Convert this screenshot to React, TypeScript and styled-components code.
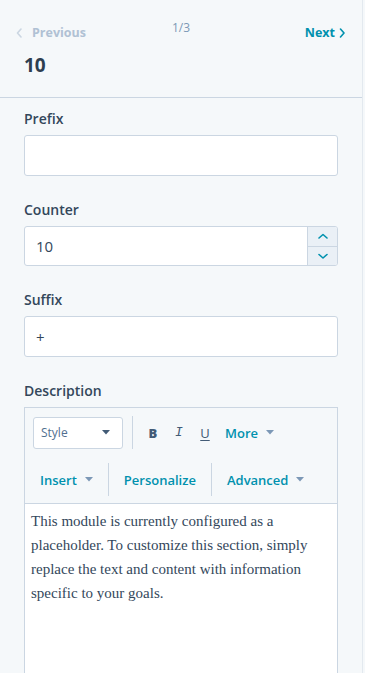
import React from 'react';
import styled, { createGlobalStyle } from 'styled-components';

const GlobalStyle = createGlobalStyle`
  html, body {
    margin: 0;
    padding: 0;
    background: #f5f8fa;
  }
  body {
    font-family: "Open Sans", "Noto Sans", sans-serif;
    color: #33475b;
  }
  * { box-sizing: border-box; }
`;

const Panel = styled.div`
  width: 363px;
  min-height: 673px;
  background: #f5f8fa;
  border-right: 1px solid #e3e9ef;
`;

const Header = styled.header`
  padding: 23px 16px 20px;
  border-bottom: 1px solid #cbd6e2;
`;

const NavRow = styled.div`
  display: grid;
  grid-template-columns: 1fr auto 1fr;
  align-items: start;
`;

const NavLink = styled.button<{ $disabled?: boolean; $align?: 'left' | 'right' }>`
  display: inline-flex;
  align-items: center;
  gap: ${(p) => (p.$align === 'right' ? 4 : 9)}px;
  justify-self: ${(p) => (p.$align === 'right' ? 'end' : 'start')};
  padding: 0;
  border: 0;
  background: none;
  font-family: inherit;
  font-size: 12.5px;
  font-weight: 700;
  line-height: 20px;
  color: ${(p) => (p.$disabled ? '#b0c1d4' : '#0091ae')};
  cursor: ${(p) => (p.$disabled ? 'default' : 'pointer')};
  svg { display: block; }
`;

const Pager = styled.span`
  margin-top: -3px;
  font-size: 12px;
  line-height: 16px;
  color: #7c98b6;
`;

const Title = styled.h1`
  margin: 10px 0 0 8px;
  font-size: 19px;
  line-height: 24px;
  font-weight: 700;
  color: #2d3e50;
`;

const Body = styled.div`
  padding: 11px 24px 0;
  display: flex;
  flex-direction: column;
  gap: 24px;
`;

const Field = styled.div`
  display: flex;
  flex-direction: column;
  gap: 6px;
`;

const Label = styled.label`
  font-size: 14px;
  line-height: 20px;
  font-weight: 600;
  color: #33475b;
`;

const TextBox = styled.div<{ $height?: number }>`
  height: ${(p) => p.$height ?? 41}px;
  background: #fff;
  border: 1px solid #cbd6e2;
  border-radius: 3px;
  display: flex;
  align-items: center;
  padding-left: 11px;
  font-size: 15px;
  color: #33475b;
  overflow: hidden;
`;

const Value = styled.span`
  flex: 1;
`;

const Stepper = styled.div`
  align-self: stretch;
  width: 30px;
  display: grid;
  grid-template-rows: 1fr 1fr;
  border-left: 1px solid #cbd6e2;
  background: #eaf0f6;
`;

const StepButton = styled.button`
  border: 0;
  padding: 0;
  background: none;
  display: flex;
  align-items: center;
  justify-content: center;
  & + & { border-top: 1px solid #cbd6e2; }
`;

const Editor = styled.div`
  border: 1px solid #cbd6e2;
  background: #fff;
`;

const Toolbar = styled.div`
  background: #f5f8fa;
  border-bottom: 1px solid #cbd6e2;
`;

const ToolRow = styled.div<{ $first?: boolean }>`
  display: flex;
  align-items: center;
  padding: ${(p) => (p.$first ? '8px 8px 0' : '14px 0 7px')};
`;

const Select = styled.div`
  width: 90px;
  height: 32px;
  background: #fff;
  border: 1px solid #cbd6e2;
  border-radius: 3px;
  display: flex;
  align-items: center;
  justify-content: space-between;
  padding: 0 12px 0 7px;
  font-size: 12px;
  color: #516f90;
`;

const VDivider = styled.span<{ $height: number }>`
  width: 1px;
  height: ${(p) => p.$height}px;
  background: #cbd6e2;
`;

const FormatGroup = styled.div`
  display: flex;
  align-items: center;
  margin-left: 7px;
`;

const FormatButton = styled.span<{ $kind: 'b' | 'i' | 'u' }>`
  width: 26px;
  text-align: center;
  font-size: 13px;
  line-height: 20px;
  color: #425b76;
  font-family: ${(p) => (p.$kind === 'i' ? '"Liberation Mono", monospace' : 'inherit')};
  font-weight: ${(p) => (p.$kind === 'b' ? 800 : 400)};
  font-style: ${(p) => (p.$kind === 'i' ? 'italic' : 'normal')};
  text-decoration: ${(p) => (p.$kind === 'u' ? 'underline' : 'none')};
  text-underline-offset: 2px;
`;

const ToolMenu = styled.span<{ $divider?: boolean; $pad?: number }>`
  display: inline-flex;
  align-items: center;
  gap: 8px;
  padding: 0 ${(p) => p.$pad ?? 15}px;
  height: 33px;
  font-size: 13px;
  font-weight: 600;
  color: #0091ae;
  border-right: ${(p) => (p.$divider ? '1px solid #cbd6e2' : '0')};
`;

const Content = styled.div`
  min-height: 220px;
  padding: 5px 6px 0;
  font-family: "Liberation Serif", "Times New Roman", serif;
  font-size: 15px;
  line-height: 24px;
  color: #33475b;
`;

const Caret = ({ color = '#7c98b6' }: { color?: string }) => (
  <svg width="8" height="5" viewBox="0 0 8 5">
    <path d="M0 0 L8 0 L4 4.5 Z" fill={color} />
  </svg>
);

const Chevron = ({ dir, color }: { dir: 'left' | 'right' | 'up' | 'down'; color: string }) => {
  const paths = {
    left: 'M5 1 L1.5 5 L5 9',
    right: 'M1.5 1 L5 5 L1.5 9',
    up: 'M1 5 L5 1.5 L9 5',
    down: 'M1 1.5 L5 5 L9 1.5',
  };
  const horizontal = dir === 'left' || dir === 'right';
  return (
    <svg
      width={horizontal ? 7 : 10}
      height={horizontal ? 10 : 7}
      viewBox={horizontal ? '0 0 7 10' : '0 0 10 7'}
      fill="none"
    >
      <path d={paths[dir]} stroke={color} strokeWidth="1.6" strokeLinecap="round" strokeLinejoin="round" />
    </svg>
  );
};

const App: React.FC = () => (
  <Panel>
    <GlobalStyle />
    <Header>
      <NavRow>
        <NavLink $disabled>
          <Chevron dir="left" color="#cbd6e2" />
          <span>Previous</span>
        </NavLink>
        <Pager>1/3</Pager>
        <NavLink $align="right">
          <span>Next</span>
          <Chevron dir="right" color="#0091ae" />
        </NavLink>
      </NavRow>
      <Title>10</Title>
    </Header>
    <Body>
      <Field>
        <Label>Prefix</Label>
        <TextBox />
      </Field>
      <Field>
        <Label>Counter</Label>
        <TextBox $height={40}>
          <Value>10</Value>
          <Stepper>
            <StepButton>
              <Chevron dir="up" color="#0091ae" />
            </StepButton>
            <StepButton>
              <Chevron dir="down" color="#0091ae" />
            </StepButton>
          </Stepper>
        </TextBox>
      </Field>
      <Field>
        <Label>Suffix</Label>
        <TextBox>
          <Value>+</Value>
        </TextBox>
      </Field>
      <Field>
        <Label>Description</Label>
        <Editor>
          <Toolbar>
            <ToolRow $first>
              <Select>
                <span>Style</span>
                <Caret color="#425b76" />
              </Select>
              <VDivider $height={33} style={{ marginLeft: 9 }} />
              <FormatGroup>
                <FormatButton $kind="b">B</FormatButton>
                <FormatButton $kind="i">I</FormatButton>
                <FormatButton $kind="u">U</FormatButton>
                <ToolMenu $pad={7}>
                  More <Caret />
                </ToolMenu>
              </FormatGroup>
            </ToolRow>
            <ToolRow>
              <ToolMenu $divider>
                Insert <Caret />
              </ToolMenu>
              <ToolMenu $divider>Personalize</ToolMenu>
              <ToolMenu>
                Advanced <Caret />
              </ToolMenu>
            </ToolRow>
          </Toolbar>
          <Content>
            This module is currently configured as a placeholder. To customize this section, simply
            replace the text and content with information specific to your goals.
          </Content>
        </Editor>
      </Field>
    </Body>
  </Panel>
);

export default App;
